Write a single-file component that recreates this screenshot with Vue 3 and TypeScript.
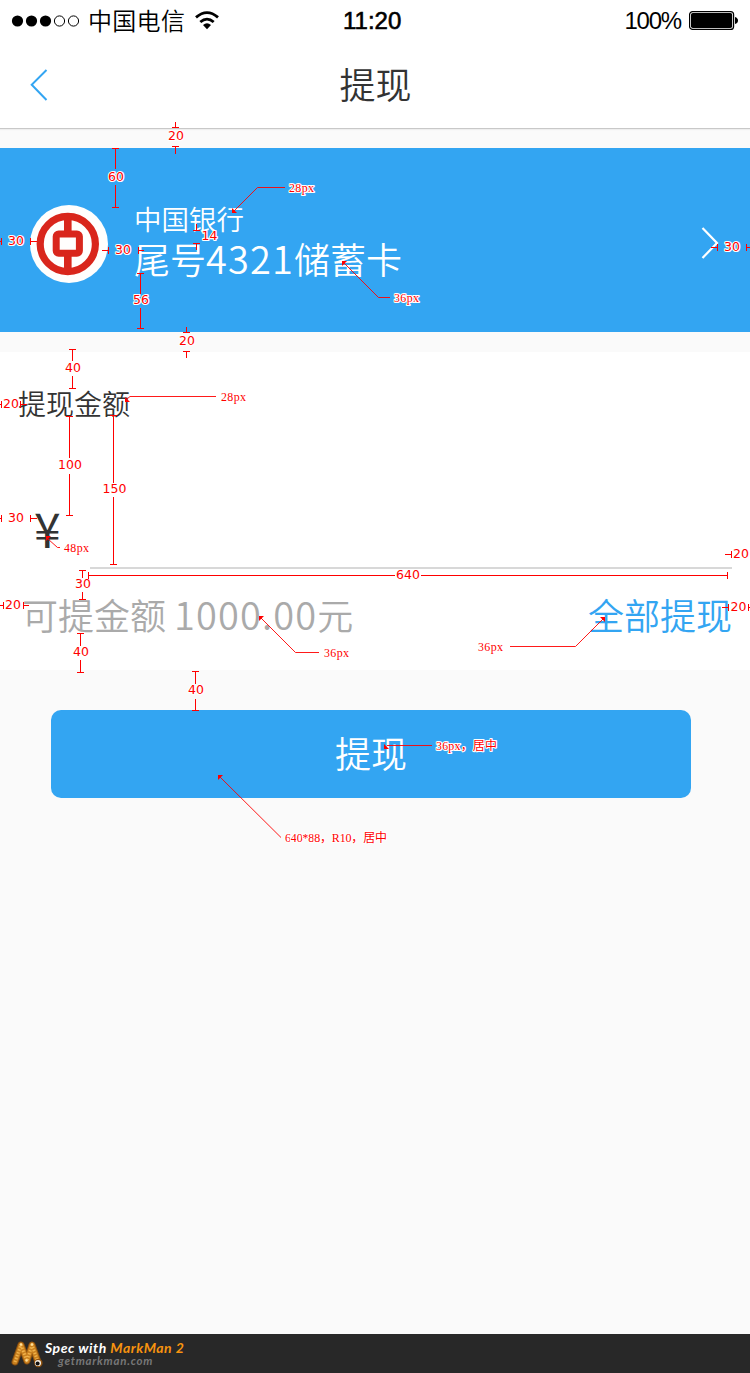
<script setup lang="ts">
interface Label {
  text: string
  x: number
  y: number
}

interface Measure extends Label {
  d: string
}

interface Callout extends Label {
  line: string
  head: string
  width: number
}

/** Vertical dimension: T-shaped ends around a centred number. */
function vertical(text: string, line: number, a: number[], b: number[], x: number, y: number, outer = true): Measure {
  const capA = outer ? a[0] : a[1]
  const capB = outer ? b[1] : b[0]
  const cap = (at: number) => `M${line - 3} ${at + 0.5}h7`
  const stem = (s: number[]) => `M${line + 0.5} ${s[0]}V${s[1] + 1}`
  return { text, x, y, d: cap(capA) + stem(a) + cap(capB) + stem(b) }
}

/** Horizontal dimension: short bars, each ending in an upright cap. */
function horizontal(text: string, row: number, bars: number[][], caps: number[], x: number, y: number): Measure {
  const d = bars.map(b => `M${b[0]} ${row + 0.5}H${b[1]}`).join('') + caps.map(c => `M${c + 0.5} ${row - 3}v7`).join('')
  return { text, x, y, d }
}

const measures: Measure[] = [
  vertical('20', 175, [122, 127], [146, 153], 176, 140, false),
  vertical('60', 115, [148, 168], [185, 207], 116, 181),
  vertical('14', 196, [224, 230], [243, 249], 209.5, 240, false),
  vertical('56', 140, [273, 293], [308, 328], 141, 304),
  vertical('20', 186, [327, 332], [351, 357], 187, 345, false),
  vertical('40', 72, [349, 360], [376, 388], 73, 372),
  vertical('100', 69, [416, 457], [474, 515], 70, 469),
  vertical('150', 113, [415, 482], [497, 564], 114.5, 493),
  vertical('30', 82, [570, 577], [592, 599], 83, 588),
  vertical('40', 80, [633, 645], [660, 672], 81, 656),
  vertical('40', 195, [671, 683], [699, 710], 196, 694),
  horizontal('30', 241, [[0, 2], [30, 37]], [1, 30], 16, 245),
  horizontal('30', 250, [[102, 108], [138, 144]], [108, 138], 123, 254),
  horizontal('30', 247, [[711, 717], [746, 750]], [717, 746], 732, 251),
  horizontal('20', 404, [[0, 2], [20, 27]], [1, 20], 11, 408),
  horizontal('30', 518, [[0, 2], [30, 37]], [1, 30], 16, 522),
  horizontal('20', 554, [[725, 731]], [731], 741, 558),
  horizontal('640', 575, [[88, 395], [421, 727]], [88, 727], 408, 579),
  horizontal('20', 605, [[0, 3], [23, 29]], [3, 23], 13, 609),
  horizontal('20', 607, [[722, 728], [748, 750]], [728, 748], 738.5, 611),
]

const callouts: Callout[] = [
  { text: '28px', x: 289, y: 192, width: 25, line: 'M234 211L257.5 187.5H285', head: 'M232 208v5h5z' },
  { text: '36px', x: 394, y: 302, width: 25, line: 'M344 263L378.5 297.5H390', head: 'M342 266v-5h5z' },
  { text: '28px', x: 221, y: 401, width: 25, line: 'M127 399L130 396.5H216', head: 'M125 397v5h5z' },
  { text: '48px', x: 64, y: 552, width: 25, line: 'M48 539L57.5 547.5H60', head: 'M46 541v-5h5z' },
  { text: '36px', x: 324, y: 657, width: 25, line: 'M261 618L295.5 652.5H319', head: 'M259 621v-5h5z' },
  { text: '36px', x: 478, y: 651, width: 25, line: 'M603 619L575.5 646.5H510', head: 'M605 622v-5h-5z' },
  { text: '36px，居中', x: 436, y: 750, width: 61, line: 'M387 745.5H432', head: 'M384 744v5h5z' },
  { text: '640*88，R10，居中', x: 285, y: 842, width: 102, line: 'M220 777L281 837.5', head: 'M218 780v-5h5z' },
]
</script>

<template>
  <main class="screen">
    <header class="top">
      <div class="status">
        <svg class="dots" width="70" height="14" viewBox="0 0 70 14">
          <circle cx="6.5" cy="7" r="5.6" />
          <circle cx="20.5" cy="7" r="5.6" />
          <circle cx="34.5" cy="7" r="5.6" />
          <circle class="empty" cx="48.5" cy="7" r="5.1" />
          <circle class="empty" cx="62.5" cy="7" r="5.1" />
        </svg>
        <span class="carrier">中国电信</span>
        <svg class="wifi" width="24" height="19" viewBox="0 0 24 19">
          <path d="M1 6.4Q12 -3.2 23 6.4M5.3 11Q12 5.2 18.7 11" />
          <path class="fill" d="M8 13.9Q12 10.4 16 13.9L12 18.3z" />
        </svg>
        <span class="time">11:20</span>
        <span class="percent">100%</span>
        <svg class="battery" width="50" height="20" viewBox="0 0 50 20">
          <rect class="shell" x=".6" y=".6" width="44" height="17.8" rx="3" />
          <rect x="2" y="2" width="41.2" height="15" rx="1.8" />
          <path d="M46 6q3 1 3 3.5t-3 3.5z" />
        </svg>
      </div>
      <nav class="nav">
        <svg class="back" width="18" height="32" viewBox="0 0 18 32"><path d="M16.5 1L1.7 15.7L16.5 31" /></svg>
        <h1>提现</h1>
      </nav>
    </header>

    <section class="card">
      <svg class="logo" width="78" height="78" viewBox="0 0 78 78">
        <circle cx="39" cy="39" r="39" fill="#fffefd" />
        <circle cx="37.8" cy="39" r="27.6" fill="none" stroke="#d9261c" stroke-width="7.2" />
        <path d="M37.8 12v17M37.8 49v17" stroke="#d9261c" stroke-width="7.6" />
        <rect x="26.2" y="29" width="23.2" height="19.2" rx="2.5" fill="#fffefd" stroke="#d9261c" stroke-width="7" />
      </svg>
      <div class="account">
        <span class="bank">中国银行</span>
        <span class="number">尾号<span class="digits">4321</span>储蓄卡</span>
      </div>
      <svg class="more" width="18" height="34" viewBox="0 0 18 34"><path d="M1.5 2L16 17L1.5 32" /></svg>
    </section>

    <section class="amount">
      <h2>提现金额</h2>
      <div class="yen">¥</div>
      <div class="rule"></div>
      <div class="available">
        <span>可提金额 <span class="digits">1000.00</span>元</span>
        <a>全部提现</a>
      </div>
    </section>

    <button class="submit" type="button">提现</button>

    <footer class="foot">
      <svg class="worm" width="34" height="30" viewBox="0 0 34 30">
        <path class="edge" d="M5 23L11 6L17 22L22 6L28 23" />
        <path class="body" d="M5 23L11 6L17 22L22 6L28 23" />
        <path class="bands" d="M5 23L11 6L17 22L22 6L28 23" />
        <circle cx="11" cy="5.5" r="1.2" fill="#ffe1a0" />
        <circle cx="22" cy="5.5" r="1.2" fill="#ffe1a0" />
        <circle cx="16.6" cy="21.5" r="1.2" fill="#ffe1a0" />
        <circle cx="28.4" cy="24" r="4.2" fill="#8d500e" />
        <circle cx="28" cy="24" r="3.1" fill="#f4eee4" />
        <circle cx="27.6" cy="24.4" r="2" fill="#111" />
      </svg>
      <div class="credit">
        <div class="tool">Spec with <em>MarkMan 2</em></div>
        <div class="site">getmarkman.com</div>
      </div>
    </footer>

    <svg class="spec" width="750" height="1373" viewBox="0 0 750 1373">
      <g v-for="(m, i) in measures" :key="'m' + i">
        <path class="dim" :d="m.d" />
        <text class="size" :x="m.x" :y="m.y">{{ m.text }}</text>
      </g>
      <g v-for="(c, i) in callouts" :key="'c' + i">
        <path class="leader" :d="c.line" />
        <path class="head" :d="c.head" />
        <text class="note" :x="c.x" :y="c.y" :textLength="c.width">{{ c.text }}</text>
      </g>
    </svg>
  </main>
</template>

<style>
body {
  margin: 0;
  background: #fafafa;
}
</style>

<style scoped>
.screen {
  position: relative;
  display: flex;
  flex-direction: column;
  width: 750px;
  height: 1373px;
  overflow: hidden;
  background: #fafafa;
  color: #333;
  font-family: "Noto Sans CJK SC", sans-serif;
  font-weight: 350;
}
svg {
  display: block;
  flex: none;
}
h1,
h2 {
  margin: 0;
  font-weight: 350;
}
.top {
  box-sizing: border-box;
  height: 129px;
  border-bottom: 1px solid #c8c8c8;
  box-shadow: 0 1px 1px #eee;
  background: #fff;
}
.status {
  display: grid;
  grid-template-columns: 70px 107px 24px 1fr auto 50px;
  align-items: center;
  height: 41px;
  padding: 0 11px 0 11px;
  box-sizing: border-box;
  color: #000;
  font-size: 24px;
  line-height: 40px;
}
.carrier {
  padding: 0 0 2px 7px;
  letter-spacing: .3px;
  white-space: nowrap;
  line-height: 38px;
}
.dots .empty {
  fill: none;
  stroke: #000;
}
.wifi {
  margin-left: 7px;
}
.wifi path {
  fill: none;
  stroke: #000;
  stroke-width: 2.8;
}
.wifi .fill {
  fill: #000;
  stroke: none;
}
.time {
  padding: 1px 0 0 131px;
  font-family: "Liberation Sans", sans-serif;
  -webkit-text-stroke: .6px #000;
  font-weight: 400;
}
.percent {
  padding-top: 1px;
  font-family: "Liberation Sans", sans-serif;
  letter-spacing: -1.2px;
  margin-right: 8px;
}
.battery .shell {
  fill: none;
  stroke: #000;
  stroke-width: 1.2;
}
.nav {
  display: grid;
  grid-template-columns: 30px 1fr 29px;
  align-items: center;
  height: 87px;
}
.back {
  margin-left: 30px;
}
.back path {
  fill: none;
  stroke: #33a5f2;
  stroke-width: 2;
}
h1 {
  padding-bottom: 4px;
  font-size: 36px;
  line-height: 82px;
  text-align: center;
}
.card {
  display: flex;
  align-items: center;
  height: 184px;
  margin-top: 19px;
  padding: 0 31px 0 30px;
  box-sizing: border-box;
  background: #33a5f2;
  color: #fff;
}
.logo {
  margin-top: 8px;
}
.account {
  flex: 1;
  display: flex;
  flex-direction: column;
  padding: 0 0 2px 26px;
}
.bank {
  font-size: 27.5px;
  line-height: 38px;
}
.number {
  font-size: 36px;
  line-height: 42px;
}
.digits {
  font-size: 38px;
  line-height: 1;
  letter-spacing: 1.1px;
}
.more {
  margin-top: 5px;
}
.more path {
  fill: none;
  stroke: #fff;
  stroke-width: 2.2;
}
.amount {
  height: 318px;
  margin-top: 20px;
  background: #fff;
}
h2 {
  padding: 31px 0 0 18px;
  font-size: 28px;
  line-height: 40px;
}
.yen {
  margin-top: 74px;
  padding-left: 34px;
  height: 70px;
  font-size: 48px;
  font-weight: 400;
  line-height: 60px;
}
.rule {
  height: 2px;
  margin: 0 18px 0 90px;
  background: #d8d8d8;
}
.available {
  display: flex;
  justify-content: space-between;
  padding: 18px 18px 0 22px;
  font-size: 36px;
  line-height: 54px;
  color: #aaa;
}
.available a {
  color: #33a5f2;
}
.submit {
  width: 640px;
  height: 88px;
  margin: 40px 0 0 51px;
  padding: 0 0 4px;
  border: 0;
  border-radius: 10px;
  background: #33a5f2;
  color: #fff;
  font: 350 36px/84px "Noto Sans CJK SC", sans-serif;
}
.foot {
  display: flex;
  height: 39px;
  margin-top: auto;
  padding-left: 10px;
  box-sizing: border-box;
  background: #282828;
  font-family: Lato, sans-serif;
  font-style: italic;
  font-weight: 700;
}
.worm {
  margin-top: 5px;
}
.worm path {
  fill: none;
  stroke-linejoin: round;
  stroke-linecap: round;
}
.worm .edge {
  stroke: #8d500e;
  stroke-width: 7;
}
.worm .body {
  stroke: #c9801f;
  stroke-width: 5;
}
.worm .bands {
  stroke: #f0b24b;
  stroke-width: 3;
  stroke-linecap: butt;
  stroke-dasharray: 1.4 1.6;
}
.tool {
  padding: 6px 0 0 1px;
  font-size: 14px;
  line-height: 15px;
  letter-spacing: .5px;
  color: #fff;
}
.tool em {
  color: #f7930f;
}
.site {
  padding-left: 14px;
  font-size: 11.5px;
  line-height: 11px;
  letter-spacing: .75px;
  color: #777;
}
.spec {
  position: absolute;
  top: 0;
  left: 0;
}
.dim {
  fill: none;
  stroke: #f00;
  shape-rendering: crispEdges;
}
.leader {
  fill: none;
  stroke: #f00;
  stroke-width: .9;
}
.head {
  fill: #f00;
}
.size,
.note {
  fill: #f00;
  stroke: #fff;
  stroke-width: 2.2px;
  stroke-linejoin: round;
  paint-order: stroke;
  font-weight: 400;
}
.size {
  font-family: "DejaVu Sans", sans-serif;
  font-size: 12.5px;
  text-anchor: middle;
}
.note {
  font-family: "Liberation Serif", "Noto Sans CJK SC", serif;
  font-size: 12px;
}
</style>
